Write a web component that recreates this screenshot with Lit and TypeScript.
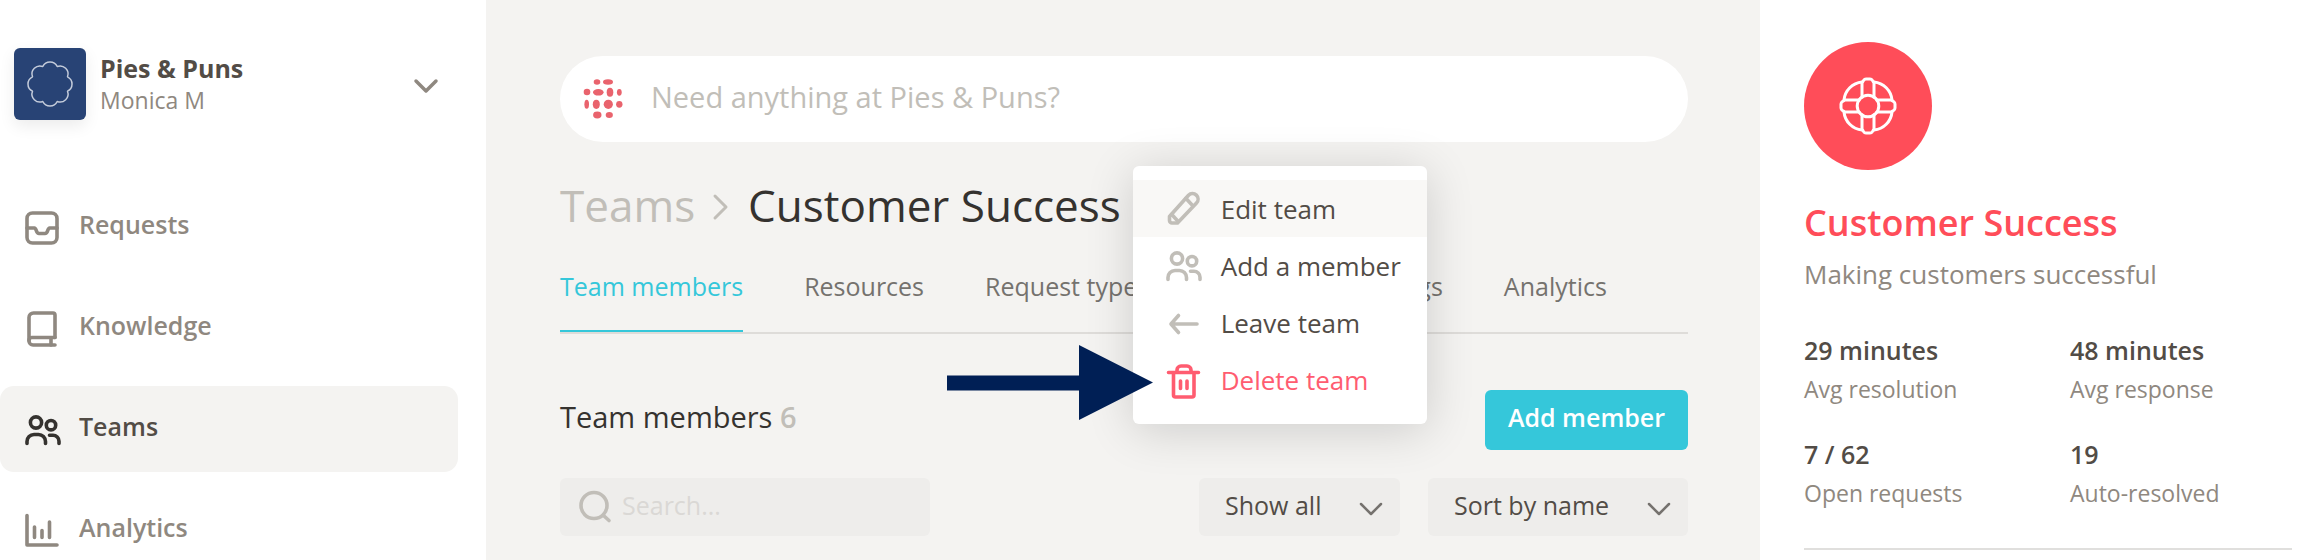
import { LitElement, html, css, svg } from "lit";
import { customElement } from "lit/decorators.js";
import { classMap } from "lit/directives/class-map.js";

const people = svg`
  <circle cx="12" cy="10.5" r="5.6"/>
  <circle cx="27" cy="13.2" r="4.7"/>
  <path d="M3 31.5v-2a7 7 0 0 1 7-7h4.500a7 7 0 0 1 7 7v2"/>
  <path d="M25.500 23.300h3.500a6 6 0 0 1 6 6v2.200"/>`;

const icons = {
  requests: svg`<rect x="3" y="3" width="30" height="30" rx="5.500"/>
    <path d="M3 18h7.500c2 0 1.500 5.500 4.500 5.500h6c3 0 2.500-5.500 4.500-5.500H33"/>`,
  knowledge: svg`<path d="M31 26.500V4a2 2 0 0 0-2-2H9.500A4.500 4.500 0 0 0 5 6.500V30a4 4 0 0 0 4 4h22"/>
    <path d="M5 29.500a3 3 0 0 1 3-3h23M27 27v7"/>`,
  people,
  analytics: svg`<path d="M3 2.500V32h30M10.500 14v10.500M18 17.500v7M25.500 9v15.500"/>`,
  pencil: svg`<path d="M4.500 25.500 23.500 4.300a5.500 5.500 0 0 1 8 7.700L12.500 32H7a2.500 2.500 0 0 1-2.500-2.500z"/>
    <path d="m6.500 23.300 6.500 7M20.800 7.300l7 7.500"/>`,
  leave: svg`<path d="M32 19H6.500M13.500 10.500 6 19l7.500 8.500"/>`,
  trash: svg`<path d="M3.500 10.500h30M8.500 11v22a2 2 0 0 0 2 2H27a2 2 0 0 0 2-2V11"/>
    <path d="M12 10V8a4 4 0 0 1 4-4h6a4 4 0 0 1 4 4v2M15.500 19v7.500M22 19v7.500"/>`,
};

const icon = (name: keyof typeof icons) =>
  html`<svg class="icon" viewBox="0 0 36 36" aria-hidden="true">${icons[name]}</svg>`;

const chevron = html`<svg class="chevron" viewBox="0 0 24 14" aria-hidden="true">
  <path d="M2 2l10 10L22 2"/></svg>`;

const iconStyles = css`
  svg { display: block; flex: none; overflow: visible; fill: none; stroke: currentColor;
    stroke-linecap: round; stroke-linejoin: round; }
  .icon { width: 36px; height: 36px; stroke-width: 3.6; }
  .chevron { width: 24px; height: 14px; stroke-width: 3; }
  button, input, select { font: inherit; color: inherit; border: 0; margin: 0; background: none; padding: 0; }
  button { cursor: pointer; text-align: left; }
  a { color: inherit; text-decoration: none; }
  * { box-sizing: border-box; }
`;

@customElement("side-nav")
class SideNav extends LitElement {
  static styles = [iconStyles, css`
    :host { display: block; background: #fff; padding: 48px 28px 0 0; overflow: hidden; color: #8f8880; }
    .workspace { display: flex; align-items: center; width: 100%; height: 72px; padding: 0 20px 0 14px; }
    .avatar { width: 72px; height: 72px; border-radius: 6px; background: #284375;
      box-shadow: 0 6px 16px rgba(0, 0, 0, .08); }
    .avatar svg { stroke: #c3cbda; stroke-width: 1.5; }
    .who { flex: 1; padding-left: 14px; font-size: 23px; line-height: 32px; }
    .who strong, .who span { display: block; }
    .who strong { font-size: 25px; color: #524c46; }
    nav { display: grid; gap: 15px; padding-top: 64px; }
    .item { display: flex; align-items: center; gap: 19px; height: 86px; padding: 2px 0 0 24px;
      border-radius: 14px; font-size: 25px; font-weight: 600; }
    .item span { padding-bottom: 8px; color: inherit; }
    .item.current { background: #f4f3f1; color: #35322f; }
    .item.current span { color: #524c46; }
    .workspace .chevron { margin-top: 4px; stroke-width: 3.5; }
  `];
  items: { icon: keyof typeof icons; label: string }[] = [
    { icon: "requests", label: "Requests" },
    { icon: "knowledge", label: "Knowledge" },
    { icon: "people", label: "Teams" },
    { icon: "analytics", label: "Analytics" },
  ];
  render() {
    return html`
      <button class="workspace">
        <span class="avatar"><svg viewBox="0 0 72 72" aria-hidden="true"><path d="M53.500 43.200A8 8 0 0 1 43.200 53.500A8 8 0 0 1 28.800 53.500A8 8 0 0 1 18.500 43.200A8 8 0 0 1 18.500 28.800A8 8 0 0 1 28.800 18.500A8 8 0 0 1 43.200 18.500A8 8 0 0 1 53.500 28.800A8 8 0 0 1 53.500 43.200z"/></svg></span>
        <span class="who"><strong>Pies &amp; Puns</strong><span>Monica M</span></span>
        ${chevron}
      </button>
      <nav>
        ${this.items.map((i) => html`<a href="#" class=${classMap({ item: true, current: i.label === "Teams" })}>
          ${icon(i.icon)}<span>${i.label}</span></a>`)}
      </nav>`;
  }
}

@customElement("team-menu")
class TeamMenu extends LitElement {
  static styles = [iconStyles, css`
    :host { display: block; position: relative; width: 294px; padding: 14px 0 16px; border-radius: 6px;
      background: #fff; box-shadow: 0 6px 48px rgba(0, 0, 0, .16); color: #524c46; }
    .entry { display: flex; align-items: center; gap: 20px; width: 100%; height: 57px; padding-left: 32px;
      font-size: 26px; font-weight: 400; line-height: 36px; white-space: nowrap; }
    .entry .icon { color: #c1beb8; }
    .entry.hover { background: #f9f8f6; }
    .entry.danger, .entry.danger .icon { color: #ff5c70; }
    .pointer { position: absolute; left: -186px; top: 179px; width: 206px; height: 75px;
      fill: #001f55; stroke: none; }
  `];
  render() {
    return html`
      <button class="entry hover">${icon("pencil")}<span>Edit team</span></button>
      <button class="entry">${icon("people")}<span>Add a member</span></button>
      <button class="entry">${icon("leave")}<span>Leave team</span></button>
      <button class="entry danger">${icon("trash")}<span>Delete team</span></button>
      <svg class="pointer" viewBox="0 0 206 75" aria-hidden="true"><path d="M0 30.500h132V0l74 37.500L132 75V45.500H0z"/></svg>`;
  }
}

@customElement("team-summary")
class TeamSummary extends LitElement {
  static styles = [iconStyles, css`
    :host { display: block; background: #fff; padding: 42px 14px 0 44px; color: #8f8880; }
    .badge { display: grid; place-items: center; width: 128px; height: 128px; border-radius: 50%;
      background: #ff4d59; color: #fff; }
    .badge svg { width: 60px; height: 60px; stroke-width: 3; }
    h2 { margin: 29px 0 10px; font-size: 36px; line-height: 48px; font-weight: 600; color: #ff4d59; }
    p { margin: 0; font-size: 26px; line-height: 34px; }
    dl { display: grid; grid-template-columns: 266px 1fr; row-gap: 31px; margin: 42px 0 0;
      padding-bottom: 38px; border-bottom: 2px solid #e0dfdd; line-height: 34px; }
    dl div { display: flex; flex-direction: column-reverse; gap: 5px; }
    dt { font-size: 23px; }
    dd { margin: 0; font-size: 25px; font-weight: 600; color: #524c46; }
  `];
  stats = [["29 minutes", "Avg resolution"], ["48 minutes", "Avg response"], ["7 / 62", "Open requests"], ["19", "Auto-resolved"]];
  render() {
    return html`
      <div class="badge"><svg viewBox="0 0 60 60" aria-hidden="true">
        <circle cx="30" cy="30" r="10.800"/>
        <path d="M24 6A20 20 0 0 0 6 24M36 6A20 20 0 0 1 54 24M54 36A20 20 0 0 1 36 54M24 54A20 20 0 0 1 6 36"/>
        <path d="M24 21V7l1.500-2.500q1-1.500 2.500-1.500h4q1.500 0 2.500 1.500L36 7v14M24 39v14l1.500 2.500q1 1.500 2.500 1.500h4q1.500 0 2.500-1.500L36 53V39"/>
        <path d="M21 24H7l-2.500 1.500q-1.500 1-1.500 2.500v4q0 1.500 1.500 2.500L7 36h14M39 24h14l2.500 1.500q1.500 1 1.500 2.500v4q0 1.500-1.500 2.500L53 36H39"/>
      </svg></div>
      <h2>Customer Success</h2>
      <p>Making customers successful</p>
      <dl>${this.stats.map(([v, l]) => html`<div><dt>${l}</dt><dd>${v}</dd></div>`)}</dl>`;
  }
}

@customElement("app-root")
class AppRoot extends LitElement {
  static styles = [iconStyles, css`
    :host { display: grid; grid-template-columns: 486px minmax(0, 1fr) 546px; min-height: 100vh;
      background: #f4f3f1; font-family: "Open Sans", "Noto Sans", sans-serif; }
    side-nav { height: 100vh; }
    main { padding: 56px 72px 0 74px; min-width: 0; }
    .ask { display: flex; align-items: center; height: 86px; padding: 0 24px; border-radius: 43px;
      background: #fff; gap: 28px; }
    .ask svg { width: 39px; height: 40px; fill: #e9636d; stroke: none; }
    .ask input { flex: 1; height: 86px; padding-bottom: 6px; font-size: 29px; outline: 0; }
    ::placeholder { color: #c1beb8; opacity: 1; }
    .crumbs { display: flex; align-items: center; margin-top: 33px; font-size: 44px; line-height: 60px;
      color: #c1beb8; white-space: nowrap; }
    .crumbs svg { width: 16px; height: 26px; margin: 4px 19px 0 18px; stroke-width: 3; }
    .crumbs h1 { margin: 0; font: inherit; color: #35322f; }
    .title { position: relative; }
    team-menu { position: absolute; left: calc(100% + 12px); top: -9px; z-index: 1; }
    .tabs { display: flex; gap: 61px; margin-top: 33px; border-bottom: 2px solid #dedcd9;
      font-size: 25px; line-height: 36px; color: #75726e; white-space: nowrap; }
    .tabs a { padding-bottom: 26px; border-bottom: 2px solid transparent; }
    .tabs .on { color: #35c7da; border-color: #35c7da; }
    .head { display: flex; align-items: center; justify-content: space-between; margin-top: 56px; }
    .head h2 { margin: 0; padding-bottom: 6px; font-size: 29px; line-height: 36px; font-weight: 400; color: #35322f; }
    .head b { font-weight: 600; color: #c1beb8; }
    .add { height: 60px; padding: 0 23px 6px; border-radius: 6px; background: #35c7da; color: #fff;
      font-size: 25px; font-weight: 600; }
    .filters { display: flex; gap: 28px; margin-top: 28px; font-size: 25px; color: #524c46; }
    .find, .pick { display: flex; align-items: center; height: 58px; border-radius: 6px; background: #eeedeb; }
    .find { width: 370px; margin-right: auto; padding: 0 18px; gap: 10px; }
    .find svg { width: 34px; height: 34px; stroke: #c1beb8; stroke-width: 3.6; }
    .find input { flex: 1; min-width: 0; height: 58px; padding-bottom: 4px; outline: 0; }
    .find ::placeholder { color: #dad8d5; }
    .pick { position: relative; }
    .pick select { appearance: none; height: 58px; padding: 0 78px 4px 26px; outline: 0; }
    .pick .chevron { position: absolute; right: 17px; top: 24px; pointer-events: none; color: #75726e; stroke-width: 2.5; }
  `];
  tabs = ["Team members", "Resources", "Request types", "Notification settings", "Analytics"];
  render() {
    return html`
      <side-nav></side-nav>
      <main>
        <label class="ask">
          <svg viewBox="9 9 39 40" aria-hidden="true">
            <ellipse cx="22" cy="12" rx="3.300" ry="2.700"/><ellipse cx="33" cy="12" rx="5" ry="2.700"/>
            <ellipse cx="12" cy="22" rx="3.300" ry="3.300"/><ellipse cx="23.300" cy="22.300" rx="5.300" ry="3.300"/>
            <ellipse cx="35" cy="22.300" rx="3.300" ry="4.500"/><ellipse cx="44.300" cy="22.300" rx="2.400" ry="3.400"/>
            <ellipse cx="11.700" cy="34.300" rx="2.300" ry="4.500"/><ellipse cx="21.300" cy="34.300" rx="3.500" ry="4.600"/>
            <ellipse cx="33.300" cy="34.300" rx="4.600" ry="4.600"/><ellipse cx="44.300" cy="34.300" rx="3.200" ry="3.400"/>
            <ellipse cx="22.300" cy="45" rx="4.200" ry="3.400"/><ellipse cx="34.300" cy="45" rx="3.600" ry="2.900"/>
          </svg>
          <input type="text" aria-label="Ask a question" placeholder="Need anything at Pies &amp; Puns?">
        </label>
        <div class="crumbs">
          <a href="#">Teams</a>
          <svg viewBox="0 0 16 26" aria-hidden="true"><path d="M2 2l11 11L2 24"/></svg>
          <div class="title"><h1>Customer Success</h1><team-menu></team-menu></div>
        </div>
        <nav class="tabs">
          ${this.tabs.map((t, i) => html`<a href="#" class=${classMap({ on: i === 0 })}>${t}</a>`)}
        </nav>
        <div class="head">
          <h2>Team members <b>6</b></h2>
          <button class="add">Add member</button>
        </div>
        <div class="filters">
          <label class="find">
            <svg viewBox="0 0 34 34" aria-hidden="true"><circle cx="16" cy="15.500" r="13"/><path d="M25.500 25.500l5.500 5"/></svg>
            <input type="search" aria-label="Search members" placeholder="Search...">
          </label>
          <label class="pick"><select aria-label="Filter"><option>Show all</option></select>${chevron}</label>
          <label class="pick"><select aria-label="Sort"><option>Sort by name</option></select>${chevron}</label>
        </div>
      </main>
      <team-summary></team-summary>`;
  }
}
